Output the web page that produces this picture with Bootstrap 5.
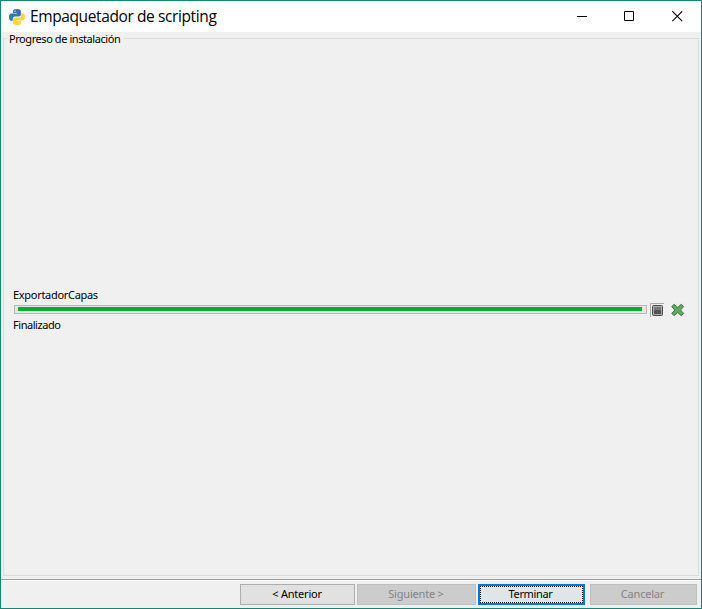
<!DOCTYPE html>
<html lang="es">
<head>
<meta charset="utf-8">
<meta name="viewport" content="width=device-width, initial-scale=1">
<title>Empaquetador de scripting</title>
<link href="https://cdn.jsdelivr.net/npm/bootstrap@5.3.0/dist/css/bootstrap.min.css" rel="stylesheet">
<style>
body{font:11px/14px "Noto Sans","Open Sans",sans-serif;color:#000;background:#f0f0f0}
.window{height:609px;border:1px solid #158577;background:#f0f0f0}
.titlebar{height:31px;background:#fff;padding-left:8px;padding-right:18px}
.titlebar h1{font:15.5px/20px "Open Sans","Noto Sans",sans-serif;letter-spacing:-.39px;margin-left:5px;padding-bottom:1px}
.controls{gap:37px}
.control-min{margin-right:-1px}
.group{height:538px;margin:6px 2px 0 2px;border:1px solid #dadada;padding:0 13px 0 9px}
.legend-text{height:14px;margin:-7px 0 0 -6px;padding:0 3px 0 2px;background:#f0f0f0;letter-spacing:-.43px;width:117px}
.task{margin-top:242px}
.label-text{letter-spacing:-.3px}
.label-status{letter-spacing:-.45px}
.track{width:633px;height:9px;border:1px solid #b8b8b8;border-radius:0;background:#e6e6e6;padding:1px 4px 2px 3px;margin:0 3px 1px 1px}
.track .progress-bar{background:#06b025;height:4px}
.footer-bar{margin-top:3px;border-top:1px solid #a0a0a0;box-shadow:inset 0 1px #fff;height:29px;padding:4px 4px 0 0}
.wbtn{--bs-btn-padding-y:0;--bs-btn-padding-x:0;--bs-btn-font-size:11px;--bs-btn-line-height:17px;--bs-btn-border-radius:0;--bs-btn-color:#000;--bs-btn-bg:#e1e1e1;--bs-btn-border-color:#adadad;--bs-btn-disabled-color:#838383;--bs-btn-disabled-bg:#ccc;--bs-btn-disabled-border-color:#bfbfbf;--bs-btn-disabled-opacity:1;height:21px;letter-spacing:-.2px;padding-bottom:2px}
.w-prev{width:115px;margin-right:2px;padding-right:1px}
.w-next{width:119px;margin-right:2px;padding-right:1px}
.w-end{width:107px;margin-right:5px;padding:0 2px 2px 0;border:2px solid #0078d7;background:#e0e5ea;line-height:15px;letter-spacing:-.35px;outline:1px dotted #000;outline-offset:-3px}
.w-cancel{width:107px;padding-right:2px}
</style>
<script src="https://cdn.jsdelivr.net/npm/bootstrap@5.3.0/dist/js/bootstrap.bundle.min.js"></script>
</head>
<body>
<div class="window d-flex flex-column overflow-hidden">
  <header class="titlebar d-flex align-items-center flex-shrink-0">
    <svg width="16" height="16" viewBox="0 0 16 16" aria-hidden="true">
      <path fill="#3674a8" d="M7.800 0C5 0 4 .9 4 2.300V4H8v.6H2.600C.9 4.600 0 6 0 8s.9 3.800 2.300 3.800h1.500V9.800c0-1.400 1-2.300 2.300-2.300h3.700c1.100 0 2.100-.9 2.100-2V2.300C11.900.9 10.500 0 7.800 0z"/>
      <path fill="#ffd344" d="M8.200 16c2.800 0 3.700-.9 3.700-2.300V12H8v-.6h5.400c1.700 0 2.600-1.400 2.600-3.400s-.9-3.800-2.300-3.800h-1.500v2c0 1.400-1 2.300-2.300 2.300H6.200c-1.100 0-2.100.9-2.100 2v3.200c0 1.400 1.400 2.300 4.100 2.300z"/>
      <circle cx="6" cy="2.200" r=".7" fill="#dce8f2"/><circle cx="10" cy="13.800" r=".7" fill="#fff6d5"/>
    </svg>
    <h1 class="mb-0 text-nowrap">Empaquetador de scripting</h1>
    <div class="controls d-flex align-items-center ms-auto">
      <svg class="control-min" width="11" height="11" viewBox="0 0 11 11"><path fill="#000" d="M0 5h10v1H0z"/></svg>
      <svg width="11" height="11" viewBox="0 0 11 11"><path fill="none" stroke="#000" d="M.5.5h9v9h-9z"/></svg>
      <svg width="11" height="11" viewBox="0 0 11 11"><path fill="none" stroke="#000" stroke-width="1.100" d="M.3.300l9.900 9.900M10.200.300L.3 10.200"/></svg>
    </div>
  </header>
  <main class="group flex-shrink-0">
    <div class="legend-text text-nowrap">Progreso de instalación</div>
    <section class="task">
      <div class="label-text">ExportadorCapas</div>
      <div class="d-flex align-items-center">
        <div class="track progress" role="progressbar" aria-valuenow="100" aria-valuemin="0" aria-valuemax="100"><div class="progress-bar w-100"></div></div>
        <svg width="14" height="16" viewBox="0 0 14 16">
          <path d="M.5 15V1.500H14" fill="none" stroke="#a8a8a8"/>
          <rect x="2.500" y="3.500" width="10" height="10" rx="1" fill="#aaa" stroke="#4c4c4c"/>
          <rect x="4" y="5" width="7" height="7" fill="#555"/><path fill="#787878" d="M4 5h7v3H4z"/>
        </svg>
        <svg class="ms-auto" width="14" height="14" viewBox="0 0 14 14"><path d="M3.200 1.300L6.700 4.500l3.500-3.200 2.500 2.300L9.500 7l3.200 3.400-2.500 2.300-3.500-3.200-3.500 3.200-2.500-2.300L3.900 7 .7 3.600z" fill="#63a765" stroke="#3b7a3f" stroke-linejoin="round"/></svg>
      </div>
      <div class="label-status">Finalizado</div>
    </section>
  </main>
  <footer class="footer-bar d-flex justify-content-end flex-shrink-0">
    <button class="btn wbtn w-prev" type="button">&lt; Anterior</button>
    <button class="btn wbtn w-next" type="button" disabled>Siguiente &gt;</button>
    <button class="btn wbtn w-end" type="button">Terminar</button>
    <button class="btn wbtn w-cancel" type="button" disabled>Cancelar</button>
  </footer>
</div>
</body>
</html>
